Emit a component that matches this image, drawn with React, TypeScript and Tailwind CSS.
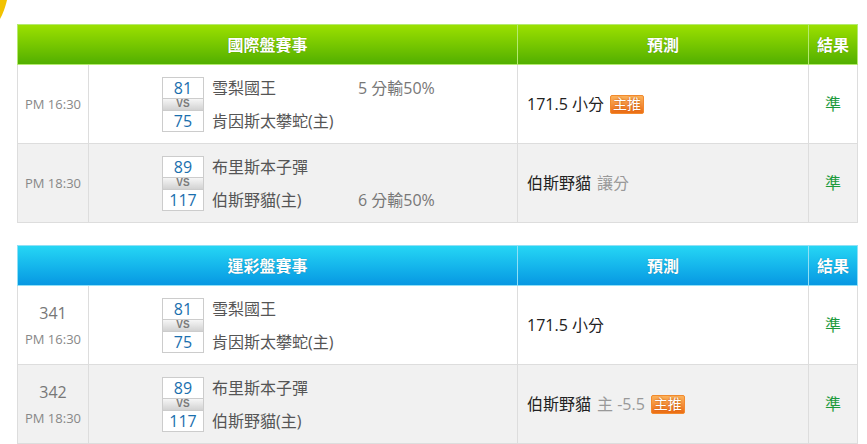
import React from "react";

type Game = {
  no?: string;
  time: string;
  away: { score: string; name: string };
  home: { score: string; name: string };
  line: string;
  lineRow: 1 | 2;
  pick: string;
  pickNote?: string;
  hot?: boolean;
  result: string;
};

const intl: Game[] = [
  {
    time: "PM 16:30",
    away: { score: "81", name: "雪梨國王" },
    home: { score: "75", name: "肯因斯太攀蛇(主)" },
    line: "5 分輸50%",
    lineRow: 1,
    pick: "171.5 小分",
    hot: true,
    result: "準",
  },
  {
    time: "PM 18:30",
    away: { score: "89", name: "布里斯本子彈" },
    home: { score: "117", name: "伯斯野貓(主)" },
    line: "6 分輸50%",
    lineRow: 2,
    pick: "伯斯野貓",
    pickNote: "讓分",
    result: "準",
  },
];

const lottery: Game[] = [
  {
    no: "341",
    time: "PM 16:30",
    away: { score: "81", name: "雪梨國王" },
    home: { score: "75", name: "肯因斯太攀蛇(主)" },
    line: "",
    lineRow: 1,
    pick: "171.5 小分",
    result: "準",
  },
  {
    no: "342",
    time: "PM 18:30",
    away: { score: "89", name: "布里斯本子彈" },
    home: { score: "117", name: "伯斯野貓(主)" },
    line: "",
    lineRow: 2,
    pick: "伯斯野貓",
    pickNote: "主 -5.5",
    hot: true,
    result: "準",
  },
];

function HotBadge() {
  return (
    <span className="ml-[6px] inline-flex h-[19px] items-center rounded-[2px] border border-[#f28a2e] bg-gradient-to-b from-[#fbb25a] to-[#ec6d12] px-[2px] text-[14px] leading-none text-white [text-shadow:0_0_2px_#b84a00]">
      主推
    </span>
  );
}

function ScoreBox({ away, home }: { away: string; home: string }) {
  return (
    <div className="flex w-[42px] flex-col border border-[#cccccc] bg-white text-center">
      <div className="flex h-[20px] items-center justify-center text-[16px] leading-[20px] text-[#1a6fae]">{away}</div>
      <div className="flex h-[13px] items-center justify-center border-y border-[#cccccc] bg-gradient-to-b from-[#f6f6f6] to-[#d2d2d2] font-['Liberation_Sans',sans-serif] text-[10px] font-bold leading-[10px] text-[#7a7a7a]">
        VS
      </div>
      <div className="flex h-[20px] items-center justify-center text-[16px] leading-[20px] text-[#1a6fae]">{home}</div>
    </div>
  );
}

function Board({ title, tone, games }: { title: string; tone: "green" | "blue"; games: Game[] }) {
  const head =
    tone === "green"
      ? "bg-gradient-to-b from-[#9be000] to-[#4fae00] border-[#a8e45c]"
      : "bg-gradient-to-b from-[#26d6f4] to-[#0896e2] border-[#86dcf6]";
  const th = tone === "green" ? "border-[#b4ea70]" : "border-[#8fe0f6]";

  return (
    <table className="w-[840px] table-fixed border-collapse border border-[#dddddd]">
      <colgroup>
        <col className="w-[71px]" />
        <col className="w-[429px]" />
        <col className="w-[291px]" />
        <col className="w-[49px]" />
      </colgroup>
      <thead>
        <tr className={`h-[40px] ${head} text-[16px] font-bold text-white [text-shadow:0_0_1px_rgba(0,0,0,0.35)]`}>
          <th colSpan={2} className={`border ${th} font-bold`}>
            {title}
          </th>
          <th className={`border ${th} font-bold`}>預測</th>
          <th className={`border ${th} font-bold`}>結果</th>
        </tr>
      </thead>
      <tbody>
        {games.map((g, i) => (
          <tr key={i} className={`h-[79px] ${i % 2 ? "bg-[#f1f1f1]" : "bg-white"}`}>
            <td className="border border-[#dddddd] text-center text-[#888888]">
              {g.no && <div className="mb-[7px] text-[16px] leading-[20px] text-[#777777]">{g.no}</div>}
              <div className="text-[13px] leading-[18px]">{g.time}</div>
            </td>
            <td className="border border-[#dddddd]">
              <div className="flex items-center pl-[73px]">
                <ScoreBox away={g.away.score} home={g.home.score} />
                <div className="ml-[8px] flex h-[55px] w-[146px] flex-col justify-between text-[16px] text-[#555555]">
                  <div className="leading-[22px]">{g.away.name}</div>
                  <div className="leading-[22px]">{g.home.name}</div>
                </div>
                <div className="flex h-[55px] flex-col justify-between text-[16px] text-[#777777]">
                  <div className="h-[22px] leading-[22px]">{g.lineRow === 1 ? g.line : ""}</div>
                  <div className="h-[22px] leading-[22px]">{g.lineRow === 2 ? g.line : ""}</div>
                </div>
              </div>
            </td>
            <td className="border border-[#dddddd] pl-[9px]">
              <div className="flex items-center text-[16px] text-[#222222]">
                <span>{g.pick}</span>
                {g.pickNote && <span className="ml-[6px] text-[#999999]">{g.pickNote}</span>}
                {g.hot && <HotBadge />}
              </div>
            </td>
            <td className="border border-[#dddddd] text-center text-[16px] text-[#1d9a3c]">{g.result}</td>
          </tr>
        ))}
      </tbody>
    </table>
  );
}

export default function App() {
  return (
    <div
      className="relative h-[444px] w-[867px] overflow-hidden bg-white pl-[17px] pt-[24px]"
      style={{ fontFamily: '"Open Sans", "Noto Sans CJK TC", sans-serif' }}
    >
      <svg className="absolute left-0 top-0" width="10" height="22" viewBox="0 0 10 22">
        <path d="M0 0 H7 Q4.5 11 0 19 Z" fill="#f2c200" />
      </svg>
      <Board title="國際盤賽事" tone="green" games={intl} />
      <div className="h-[22px]" />
      <Board title="運彩盤賽事" tone="blue" games={lottery} />
    </div>
  );
}
